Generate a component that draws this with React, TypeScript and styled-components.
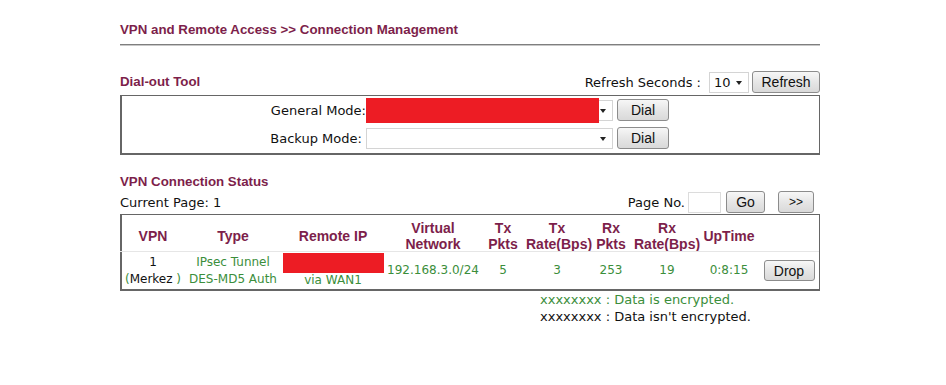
import React from "react";
import styled, { createGlobalStyle } from "styled-components";

const maroon = "#7d1f4b";
const green = "#3b8e3b";

const GlobalStyle = createGlobalStyle`
  html, body {
    margin: 0;
    padding: 0;
    background: #ffffff;
  }
  body {
    font-family: "DejaVu Sans", Verdana, sans-serif;
  }
`;

const Page = styled.div`
  width: 700px;
  padding: 20px 0 40px 120px;
`;

const PageTitle = styled.div`
  font-family: "Liberation Sans", Arial, sans-serif;
  font-weight: bold;
  font-size: 13.3px;
  line-height: 18px;
  padding-top: 1px;
  color: ${maroon};
`;

const TitleRule = styled.div`
  margin-top: 5px;
  height: 1px;
  background: #7f7f7f;
  box-shadow: 0 1px 0 #c8c8c8;
`;

const SectionBar = styled.div<{ $top: number }>`
  display: flex;
  align-items: center;
  justify-content: space-between;
  height: 22px;
  margin-top: ${(p) => p.$top}px;
`;

const SectionTitle = styled.div<{ $top?: number }>`
  font-family: "Liberation Sans", Arial, sans-serif;
  font-weight: bold;
  font-size: 13.3px;
  line-height: 18px;
  color: ${maroon};
  margin-top: ${(p) => p.$top ?? 0}px;
`;

const Controls = styled.div`
  display: flex;
  align-items: center;
  gap: 3px;
`;

const PlainText = styled.span<{ $gap?: number }>`
  font-size: 13px;
  color: #111;
  margin-right: ${(p) => p.$gap ?? 0}px;
`;

const Button = styled.button<{ $w: number; $h?: number }>`
  width: ${(p) => p.$w}px;
  height: ${(p) => p.$h ?? 22}px;
  padding: 0;
  border: 1px solid #8c8c8c;
  border-radius: 3px;
  background: linear-gradient(#f7f7f7, #e6e6e6 50%, #d9d9d9);
  font-family: "Liberation Sans", Arial, sans-serif;
  font-size: 14px;
  color: #111;
  cursor: pointer;
`;

const DialButton = styled(Button)`
  margin-left: 4px;
`;

const SelectBox = styled.div<{ $w: number }>`
  position: relative;
  display: flex;
  align-items: center;
  width: ${(p) => p.$w}px;
  height: 21px;
  box-sizing: border-box;
  border: 1px solid #d4d4d4;
  background: #fff;
  font-size: 13px;
  color: #111;
  padding-left: 4px;
`;

const Arrow = styled.span`
  position: absolute;
  right: 6px;
  top: 8px;
  width: 0;
  height: 0;
  border-left: 3px solid transparent;
  border-right: 3px solid transparent;
  border-top: 4px solid #222;
`;

const Redact = styled.div<{ $w: number; $h: number }>`
  width: ${(p) => p.$w}px;
  height: ${(p) => p.$h}px;
  background: #ed1c24;
  flex: none;
`;

const SelectRedact = styled(Redact)`
  position: absolute;
  left: -1px;
  top: -3px;
`;

const DialBox = styled.div`
  margin-top: 2px;
  border: 1px solid #666;
  border-left-width: 2px;
  border-bottom-width: 2px;
  padding-bottom: 1px;
`;

const DialRow = styled.div`
  display: grid;
  grid-template-columns: 244px 247px 56px;
  align-items: center;
  height: 28px;
`;

const DialLabel = styled.span`
  text-align: right;
  font-size: 13px;
  color: #111;
  white-space: pre;
`;

const PagerRow = styled.div`
  display: flex;
  align-items: center;
  justify-content: space-between;
  height: 22px;
  padding-right: 6px;
`;

const PageInput = styled.div`
  width: 33px;
  height: 21px;
  box-sizing: border-box;
  border: 1px solid #dcdcdc;
  background: #fff;
  margin-right: 2px;
`;

const NextButton = styled(Button)`
  margin-left: 10px;
  font-size: 12px;
`;

const cols = "66px 94px 106px 94px 46px 62px 46px 66px 58px 62px";

const StatusTable = styled.div`
  margin-top: 1px;
  border: 1px solid #666;
  border-left-width: 2px;
  border-bottom-width: 2px;
`;

const HeadRow = styled.div`
  display: grid;
  grid-template-columns: ${cols};
  align-items: center;
  height: 31px;
  padding-top: 5px;
  overflow: hidden;
  margin-left: -2px;
`;

const HeadCell = styled.div`
  text-align: center;
  font-family: "Liberation Sans", Arial, sans-serif;
  font-weight: bold;
  font-size: 14px;
  line-height: 16px;
  color: ${maroon};
  white-space: pre;
`;

const DataRow = styled.div`
  display: grid;
  grid-template-columns: ${cols};
  align-items: center;
  height: 37px;
  border-top: 1px solid #e6e6e6;
  margin-left: -2px;
`;

const DataCell = styled.div<{ $dark?: boolean }>`
  display: flex;
  flex-direction: column;
  align-items: center;
  font-family: "DejaVu Sans", Verdana, sans-serif;
  font-size: 12px;
  line-height: 17px;
  color: ${(p) => (p.$dark ? "#111" : green)};
  white-space: nowrap;
`;

const Paren = styled.span`
  color: ${green};
`;

const ViaLine = styled.span`
  line-height: 15px;
`;

const Notes = styled.div`
  margin-left: 420px;
  font-family: "DejaVu Sans", Verdana, sans-serif;
  font-size: 13px;
  line-height: 17px;
`;

const Note = styled.div<{ $green?: boolean }>`
  color: ${(p) => (p.$green ? green : "#111")};
`;

const headers = [
  "VPN",
  "Type",
  "Remote IP",
  "Virtual\nNetwork",
  "Tx\nPkts",
  "Tx\nRate(Bps)",
  "Rx\nPkts",
  "Rx\nRate(Bps)",
  "UpTime",
  "",
];

export default function App() {
  return (
    <>
      <GlobalStyle />
      <Page>
        <PageTitle>VPN and Remote Access &gt;&gt; Connection Management</PageTitle>
        <TitleRule />

        <SectionBar $top={26}>
          <SectionTitle>Dial-out Tool</SectionTitle>
          <Controls>
            <PlainText $gap={5}>Refresh Seconds :</PlainText>
            <SelectBox $w={40}>
              10
              <Arrow />
            </SelectBox>
            <Button $w={68}>Refresh</Button>
          </Controls>
        </SectionBar>

        <DialBox>
          <DialRow>
            <DialLabel>General Mode:</DialLabel>
            <SelectBox $w={247}>
              <SelectRedact $w={233} $h={25} />
              <Arrow />
            </SelectBox>
            <DialButton $w={52}>Dial</DialButton>
          </DialRow>
          <DialRow>
            <DialLabel>Backup Mode: </DialLabel>
            <SelectBox $w={247}>
              <Arrow />
            </SelectBox>
            <DialButton $w={52}>Dial</DialButton>
          </DialRow>
        </DialBox>

        <SectionTitle $top={18}>VPN Connection Status</SectionTitle>
        <PagerRow>
          <PlainText>Current Page: 1</PlainText>
          <Controls>
            <PlainText>Page No.</PlainText>
            <PageInput />
            <Button $w={39}>Go</Button>
            <NextButton $w={36}>&gt;&gt;</NextButton>
          </Controls>
        </PagerRow>

        <StatusTable>
          <HeadRow>
            {headers.map((h, i) => (
              <HeadCell key={i}>{h}</HeadCell>
            ))}
          </HeadRow>
          <DataRow>
            <DataCell $dark>
              <span>1</span>
              <span>
                <Paren>(</Paren>Merkez <Paren>)</Paren>
              </span>
            </DataCell>
            <DataCell>
              <span>IPsec Tunnel</span>
              <span>DES-MD5 Auth</span>
            </DataCell>
            <DataCell>
              <Redact $w={101} $h={20} />
              <ViaLine>via WAN1</ViaLine>
            </DataCell>
            <DataCell>192.168.3.0/24</DataCell>
            <DataCell>5</DataCell>
            <DataCell>3</DataCell>
            <DataCell>253</DataCell>
            <DataCell>19</DataCell>
            <DataCell>0:8:15</DataCell>
            <DataCell>
              <Button $w={51} $h={21}>
                Drop
              </Button>
            </DataCell>
          </DataRow>
        </StatusTable>

        <Notes>
          <Note $green>xxxxxxxx : Data is encrypted.</Note>
          <Note>xxxxxxxx : Data isn't encrypted.</Note>
        </Notes>
      </Page>
    </>
  );
}
